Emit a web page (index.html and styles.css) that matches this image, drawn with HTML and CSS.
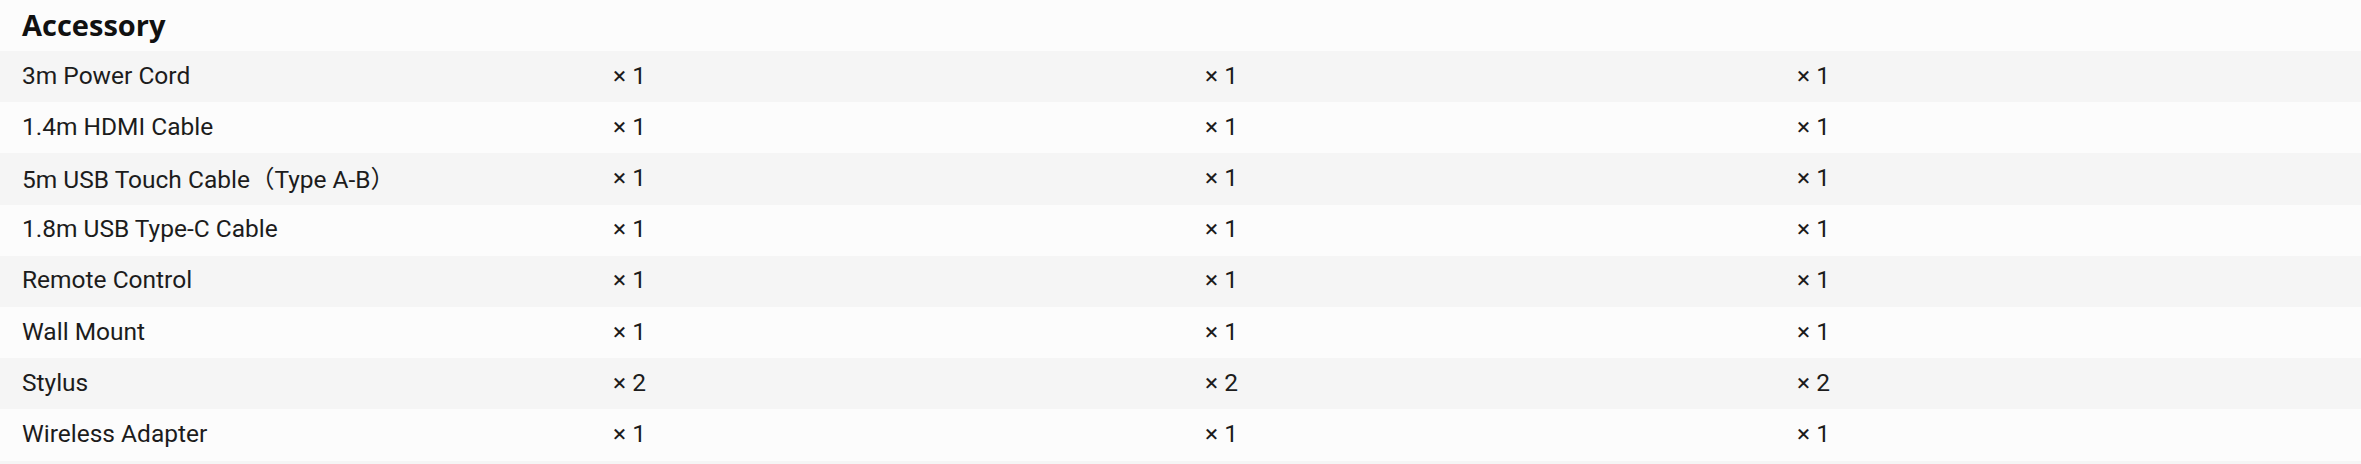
FILE: index.html
```html
<!DOCTYPE html>
<html lang="en">
<head>
<meta charset="utf-8">
<title>Accessory</title>
<link rel="stylesheet" href="styles.css">
</head>
<body>
<section class="spec">
  <h2 class="spec-title">Accessory</h2>
  <div class="spec-table">
    <div class="row odd"><div class="cell">3m Power Cord</div><div class="cell">× 1</div><div class="cell">× 1</div><div class="cell">× 1</div></div>
    <div class="row"><div class="cell">1.4m HDMI Cable</div><div class="cell">× 1</div><div class="cell">× 1</div><div class="cell">× 1</div></div>
    <div class="row odd"><div class="cell">5m USB Touch Cable（Type A-B）</div><div class="cell">× 1</div><div class="cell">× 1</div><div class="cell">× 1</div></div>
    <div class="row"><div class="cell">1.8m USB Type-C Cable</div><div class="cell">× 1</div><div class="cell">× 1</div><div class="cell">× 1</div></div>
    <div class="row odd"><div class="cell">Remote Control</div><div class="cell">× 1</div><div class="cell">× 1</div><div class="cell">× 1</div></div>
    <div class="row"><div class="cell">Wall Mount</div><div class="cell">× 1</div><div class="cell">× 1</div><div class="cell">× 1</div></div>
    <div class="row odd"><div class="cell">Stylus</div><div class="cell">× 2</div><div class="cell">× 2</div><div class="cell">× 2</div></div>
    <div class="row"><div class="cell">Wireless Adapter</div><div class="cell">× 1</div><div class="cell">× 1</div><div class="cell">× 1</div></div>
    <div class="row odd"><div class="cell"></div><div class="cell"></div><div class="cell"></div><div class="cell"></div></div>
  </div>
</section>
</body>
</html>
```

FILE: styles.css
```css
html, body {
  margin: 0;
  padding: 0;
  background: #fcfcfc;
}

body {
  font-family: Roboto, "Noto Sans CJK SC", sans-serif;
  color: #1c1c1c;
}

.spec-title {
  margin: 0;
  height: 51px;
  line-height: 50px;
  padding-left: 22px;
  font-family: "Open Sans", Roboto, sans-serif;
  font-size: 29px;
  font-weight: 700;
  color: #111;
}

.spec-table {
  display: flex;
  flex-direction: column;
}

.row {
  display: grid;
  grid-template-columns: 591px 592px 592px 1fr;
  height: 51.2px;
  align-items: center;
  background: #fcfcfc;
}

.row.odd {
  background: #f5f5f5;
}

.cell {
  padding-left: 22px;
  padding-bottom: 3px;
  font-size: 24.5px;
  white-space: nowrap;
}
```
